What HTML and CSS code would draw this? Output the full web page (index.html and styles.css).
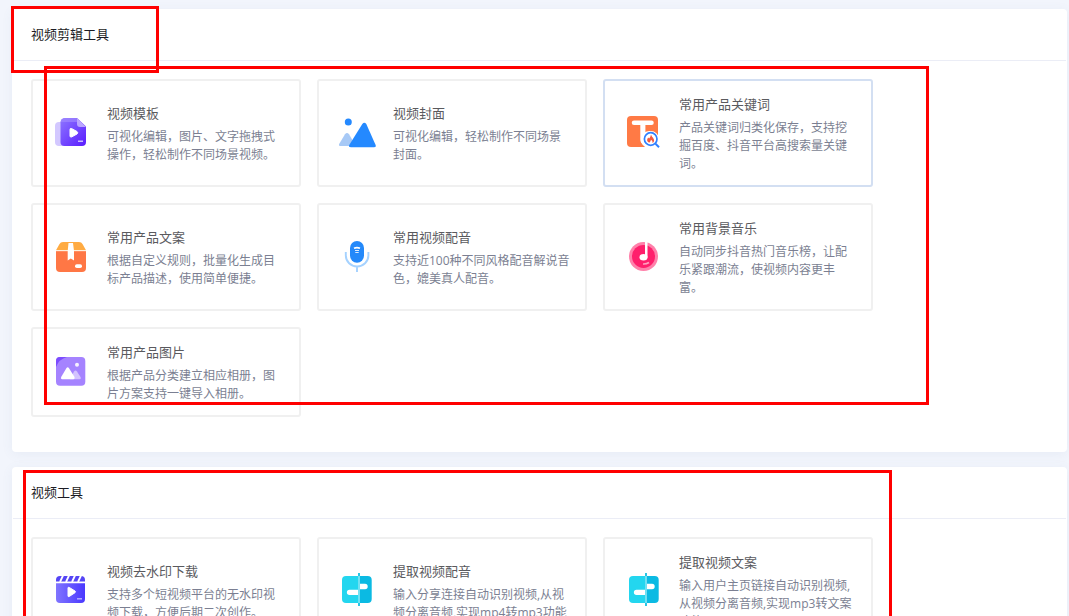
FILE: index.html
```html
<!DOCTYPE html>
<html lang="zh-CN">
<head>
<meta charset="utf-8">
<title>视频剪辑工具</title>
<link rel="stylesheet" href="styles.css">
</head>
<body>
<main class="page">
  <section class="panel">
    <h2 class="panel-title">视频剪辑工具</h2>
    <div class="cards">
      <a class="card" href="#template">
        <svg class="icon" viewBox="0 0 40 40" aria-hidden="true">
          <defs><linearGradient id="violet" x1="0" y1="0" x2="1" y2="1"><stop offset="0" stop-color="#8d75ff"/><stop offset="1" stop-color="#5a1cff"/></linearGradient></defs>
          <rect x="4" y="8" width="20" height="24" rx="4" fill="#d3c8ff"/>
          <path d="M14 4H26L35 12.500V28a4 4 0 0 1-4 4H13.500a4 4 0 0 1-4-4V8.500A4.500 4.500 0 0 1 14 4Z" fill="url(#violet)"/>
          <path d="M9.500 8.500A4.500 4.500 0 0 1 14 4H26L30 8H9.500Z" fill="#a48cff" opacity=".6"/>
          <path d="M26 4L35 13H29a3 3 0 0 1-3-3Z" fill="#bba6ff"/>
          <path d="M19 15.500q0-1.500 1.500-1L26 17.500q1.500 1.300 0 2.500l-5.500 3q-1.500.4-1.500-1Z" fill="#fff" stroke="#fff"/>
          <rect x="27" y="26.500" width="5" height="1.500" fill="#cabaff"/>
        </svg>
        <div class="copy"><h3>视频模板</h3><p>可视化编辑，图片、文字拖拽式操作，轻松制作不同场景视频。</p></div>
      </a>
      <a class="card" href="#cover">
        <svg class="icon" viewBox="0 0 40 40" aria-hidden="true">
          <circle cx="11.300" cy="8" r="3.500" fill="#2489ff"/>
          <path d="M8 20.300q2-2.400 4 0L19 32H4q-3 0-1.700-2.300Z" fill="#a7c9f6"/>
          <path d="M25.300 10q2-2.600 4 0L38.500 30.800q1 2.500-1.500 2.500H14q-3 0-1.600-2.500Z" fill="#2489ff"/>
        </svg>
        <div class="copy"><h3>视频封面</h3><p>可视化编辑，轻松制作不同场景封面。</p></div>
      </a>
      <a class="card card-active" href="#keywords">
        <svg class="icon" viewBox="0 0 40 40" aria-hidden="true">
          <rect x="4" y="2" width="31" height="31" rx="4" fill="#ff7a45"/>
          <path d="M11 8.700H28.500" stroke="#fff" stroke-width="4.500" stroke-linecap="round"/>
          <path d="M17.300 8H22.400V29q-5 2-5.100-4Z" fill="#fff"/>
          <path d="M27.700 17a8.200 8.200 0 0 1 8.300 8V34H25a8.500 8.500 0 0 1 2.700-17Z" fill="#fff"/>
          <circle cx="27.700" cy="25" r="6.300" fill="#fff" stroke="#2f80ff" stroke-width="1.700"/>
          <path d="M32.500 29.800L36 33.200" stroke="#2f80ff" stroke-width="2"/>
          <path d="M28 20.500q.5 2 2 3.200q2.400 3.300-.4 5.300q.2-2.300-1.600-3.200q-.5 1.800-1.800 3q-3.600-2.100-1-5.300l.9 1q1.500-1.500 1.900-4Z" fill="#f4583f"/>
        </svg>
        <div class="copy"><h3>常用产品关键词</h3><p>产品关键词归类化保存，支持挖掘百度、抖音平台高搜索量关键词。</p></div>
      </a>
      <a class="card" href="#copywriting">
        <svg class="icon" viewBox="0 0 40 40" aria-hidden="true">
          <path d="M5 13H35V30a4 4 0 0 1-4 4H9a4 4 0 0 1-4-4Z" fill="#ff7745"/>
          <path d="M5 12.300L8.500 6q1-2 3.500-2H28q2.500 0 3.500 2L35 12.300Z" fill="#ffab42"/>
          <path d="M5 12.700H35" stroke="#fff0df"/>
          <path d="M17.500 5H22L23 13V22.500L19.800 20.500L16.700 22.500V13Z" fill="#fff"/>
          <rect x="24" y="26.300" width="7" height="3.700" rx="1.800" fill="#fff"/>
        </svg>
        <div class="copy"><h3>常用产品文案</h3><p>根据自定义规则，批量化生成目标产品描述，使用简单便捷。</p></div>
      </a>
      <a class="card" href="#dubbing">
        <svg class="icon" viewBox="0 0 40 40" aria-hidden="true">
          <rect x="13" y="3" width="14" height="21.700" rx="7" fill="#2489fa"/>
          <path d="M8.800 14v3.500a11.300 11 0 0 0 22.600 0V14M20 28.500V34" fill="none" stroke="#a5d2ff" stroke-width="1.900"/>
          <path d="M17 10.300q3-1.400 6 0" fill="none" stroke="#fff" stroke-width="1.600"/>
          <path d="M18 12.500H22M18.300 14.500H21.700" stroke="#dcebff" stroke-width="1.200"/>
        </svg>
        <div class="copy"><h3>常用视频配音</h3><p>支持近100种不同风格配音解说音色，媲美真人配音。</p></div>
      </a>
      <a class="card" href="#music">
        <svg class="icon" viewBox="0 0 40 40" aria-hidden="true">
          <circle cx="20.500" cy="18.400" r="14.500" fill="#ff80aa"/>
          <circle cx="20.500" cy="18.400" r="11.500" fill="#ff1f6c"/>
          <rect x="22" y="3.500" width="2.500" height="16" fill="#fff"/>
          <ellipse cx="20.500" cy="19.200" rx="4" ry="3.200" fill="#fff"/>
          <path d="M20 26q3.500.2 6-1.500" fill="none" stroke="#ff9fbe" stroke-width="1.700"/>
        </svg>
        <div class="copy"><h3>常用背景音乐</h3><p>自动同步抖音热门音乐榜，让配乐紧跟潮流，使视频内容更丰富。</p></div>
      </a>
      <a class="card" href="#images">
        <svg class="icon" viewBox="0 0 40 40" aria-hidden="true">
          <rect x="5" y="4" width="29.300" height="28.700" rx="4" fill="#a583ff"/>
          <path d="M5 14V8a4 4 0 0 1 4-4h7Q8 6 5 14Z" fill="#7c4cff"/>
          <path d="M23 18.500q1.500-2 3 0L29.500 24q1 2-1 2.200H19Z" fill="#d3c3ff"/>
          <path d="M15.500 15q1.200-1.700 2.400 0L23.500 24q.8 2-1 2.200H11q-1.800-.2-.8-2.200Z" fill="#fff"/>
          <circle cx="26" cy="11.700" r="2" fill="#f6f1ff"/>
        </svg>
        <div class="copy"><h3>常用产品图片</h3><p>根据产品分类建立相应相册，图片方案支持一键导入相册。</p></div>
      </a>
    </div>
    <div class="mark mark-title"></div>
    <div class="mark mark-cards"></div>
  </section>

  <section class="panel">
    <h2 class="panel-title">视频工具</h2>
    <div class="cards">
      <a class="card" href="#watermark">
        <svg class="icon" viewBox="0 0 40 40" aria-hidden="true">
          <defs><linearGradient id="indigo" x1="0" y1="0" x2="1" y2="0"><stop offset="0" stop-color="#8075ff"/><stop offset="1" stop-color="#4a38ff"/></linearGradient></defs>
          <path d="M5 11.300H34V27a4 4 0 0 1-4 4H9a4 4 0 0 1-4-4Z" fill="url(#indigo)"/>
          <path d="M5 9.500V8a4 4 0 0 1 4-4H30a4 4 0 0 1 4 4V9.500Z" fill="#5545f5"/>
          <path d="M12 3.500L9 10M18 3.500L15 10M24 3.500L21 10M30 3.500L27 10" stroke="#fff" stroke-width="1.800"/>
          <path d="M17 16q0-1.200 1.200-.6L24 19q1 .9 0 1.700L18.200 24.500q-1.200.6-1.200-.6Z" fill="#fff" stroke="#fff"/>
          <path d="M26 26.800H31" stroke="#b5adff" stroke-width="1.500"/>
        </svg>
        <div class="copy"><h3>视频去水印下载</h3><p>支持多个短视频平台的无水印视频下载，方便后期二次创作。</p></div>
      </a>
      <a class="card" href="#extract-audio">
        <svg class="icon" viewBox="0 0 40 40" aria-hidden="true">
          <path d="M22 4H9a4 4 0 0 0-4 4V27a4 4 0 0 0 4 4H22Z" fill="#23d6ef"/>
          <path d="M22 4h8.700a4 4 0 0 1 4 4V27a4 4 0 0 1-4 4H22Z" fill="#0bbae3"/>
          <path d="M21 17.700H12.500a2.600 2.600 0 0 0 0 5.300H21ZM23 11.800h5a2.700 2.700 0 0 1 0 5.400H23Z" fill="#fff"/>
          <path d="M22 1V34" stroke="#12bfe2" stroke-width="1.800"/>
          <path d="M22 4V31" stroke="#9beefa" stroke-width="1.400"/>
        </svg>
        <div class="copy"><h3>提取视频配音</h3><p>输入分享连接自动识别视频,从视频分离音频,实现mp4转mp3功能</p></div>
      </a>
      <a class="card" href="#extract-text">
        <svg class="icon" viewBox="0 0 40 40" aria-hidden="true">
          <path d="M23 4H10a4 4 0 0 0-4 4V27a4 4 0 0 0 4 4H23Z" fill="#23d6ef"/>
          <path d="M23 4h8.700a4 4 0 0 1 4 4V27a4 4 0 0 1-4 4H23Z" fill="#0bbae3"/>
          <path d="M22 17.700H13.500a2.600 2.600 0 0 0 0 5.300H22ZM24 11.800h5a2.700 2.700 0 0 1 0 5.400H24Z" fill="#fff"/>
          <path d="M23 1V34" stroke="#12bfe2" stroke-width="1.800"/>
          <path d="M23 4V31" stroke="#9beefa" stroke-width="1.400"/>
        </svg>
        <div class="copy"><h3>提取视频文案</h3><p>输入用户主页链接自动识别视频,从视频分离音频,实现mp3转文案功能</p></div>
      </a>
    </div>
    <div class="mark mark-tools"></div>
  </section>
</main>
</body>
</html>
```
FILE: styles.css
```css
* {
  box-sizing: border-box;
}

body {
  margin: 0;
  background: #f2f5fc;
  font-family: "Open Sans", "Noto Sans CJK SC", sans-serif;
}

h2, h3, p {
  margin: 0;
  font-weight: 400;
}

.page {
  min-height: 100vh;
  padding: 9px 2px 15px 12px;
  display: flex;
  flex-direction: column;
  gap: 15px;
}

.panel {
  position: relative;
  flex: none;
  padding-bottom: 35px;
  background: #fff;
  border-radius: 4px;
  box-shadow: 0 2px 12px rgba(80, 120, 160, 0.07);
}

.panel-title {
  margin: 0 1px;
  padding: 15px 18px 16px;
  border-bottom: 1px solid #ebedf6;
  font-size: 13px;
  line-height: 20px;
  color: #1c1c24;
}

.cards {
  display: grid;
  grid-template-columns: repeat(auto-fill, 270px);
  gap: 16px;
  padding: 18px 19px 0;
}

.card {
  display: flex;
  align-items: center;
  gap: 16px;
  padding: 13px 14px 12px 18px;
  border: 2px solid #f0f0f0;
  border-radius: 3px;
  background: #fff;
  color: inherit;
  text-decoration: none;
}

.card-active {
  border-color: #d3dff2;
}

.icon {
  flex: none;
  width: 40px;
  height: 40px;
}

.copy {
  flex: 1;
  min-width: 0;
}

.copy h3 {
  margin-bottom: 5px;
  font-size: 13px;
  line-height: 20px;
  color: #5a5a5e;
}

.copy p {
  font-size: 12px;
  line-height: 18px;
  color: #7b7f92;
}

/* Red annotation frames over the panels */
.mark {
  position: absolute;
  border: 3px solid #f00;
  pointer-events: none;
}

.mark-title {
  left: -1px;
  top: -3px;
  width: 148px;
  height: 67px;
}

.mark-cards {
  left: 32px;
  top: 57px;
  width: 885px;
  height: 339px;
}

.mark-tools {
  left: 11px;
  top: 3px;
  width: 869px;
  height: 160px;
}
```
